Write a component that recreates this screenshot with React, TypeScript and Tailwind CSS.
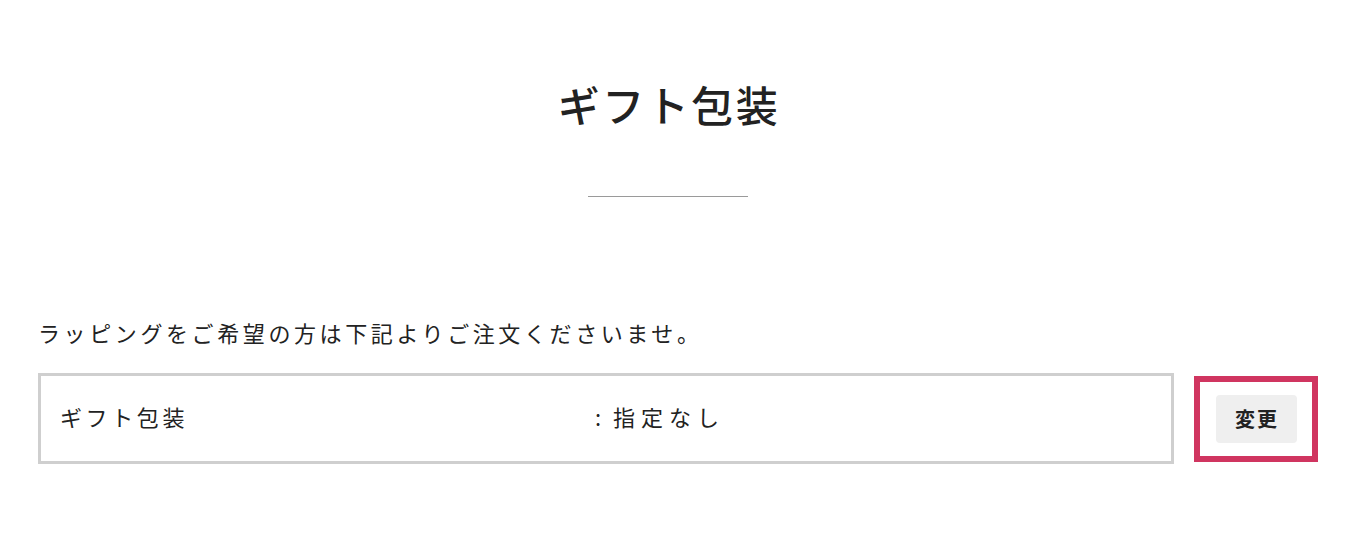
export default function App() {
    return (
        <div
            className="min-h-[544px] w-full bg-white text-[#222]"
            style={{ fontFamily: '"Noto Sans CJK JP", "Noto Sans", sans-serif' }}
        >
            <div className="flex flex-col items-center pt-[76px] pr-[10px]">
                <h1 className="text-[42px] font-medium leading-[56px] tracking-[0.06em] pl-[2px]">ギフト包装</h1>
                <div className="mt-[64px] h-px w-[160px] bg-[#9a9a9a]" />
            </div>

            <div className="pl-[38px] pr-[28px] pt-[120px]">
                <p className="text-[22px] leading-[30px] tracking-[3.6px]">
                    ラッピングをご希望の方は下記よりご注文くださいませ。
                </p>

                <div className="mt-[26px] flex items-center gap-[20px]">
                    <div className="flex h-[91px] flex-1 items-center border-[3px] border-[#cfcfcf] pl-[19px] pb-[4px] text-[22px]">
                        <span className="w-[535px] tracking-[3.6px]">ギフト包装</span>
                        <span className="w-[18px]">:</span>
                        <span className="tracking-[6px]">指定なし</span>
                    </div>

                    <div className="flex h-[86px] w-[124px] items-center justify-center border-[6px] border-[#d03560]">
                        <button className="h-[48px] w-[81px] rounded-[4px] bg-[#efefef] text-[20px] font-bold tracking-[2px] pl-[2px]">
                            変更
                        </button>
                    </div>
                </div>
            </div>
        </div>
    );
}
